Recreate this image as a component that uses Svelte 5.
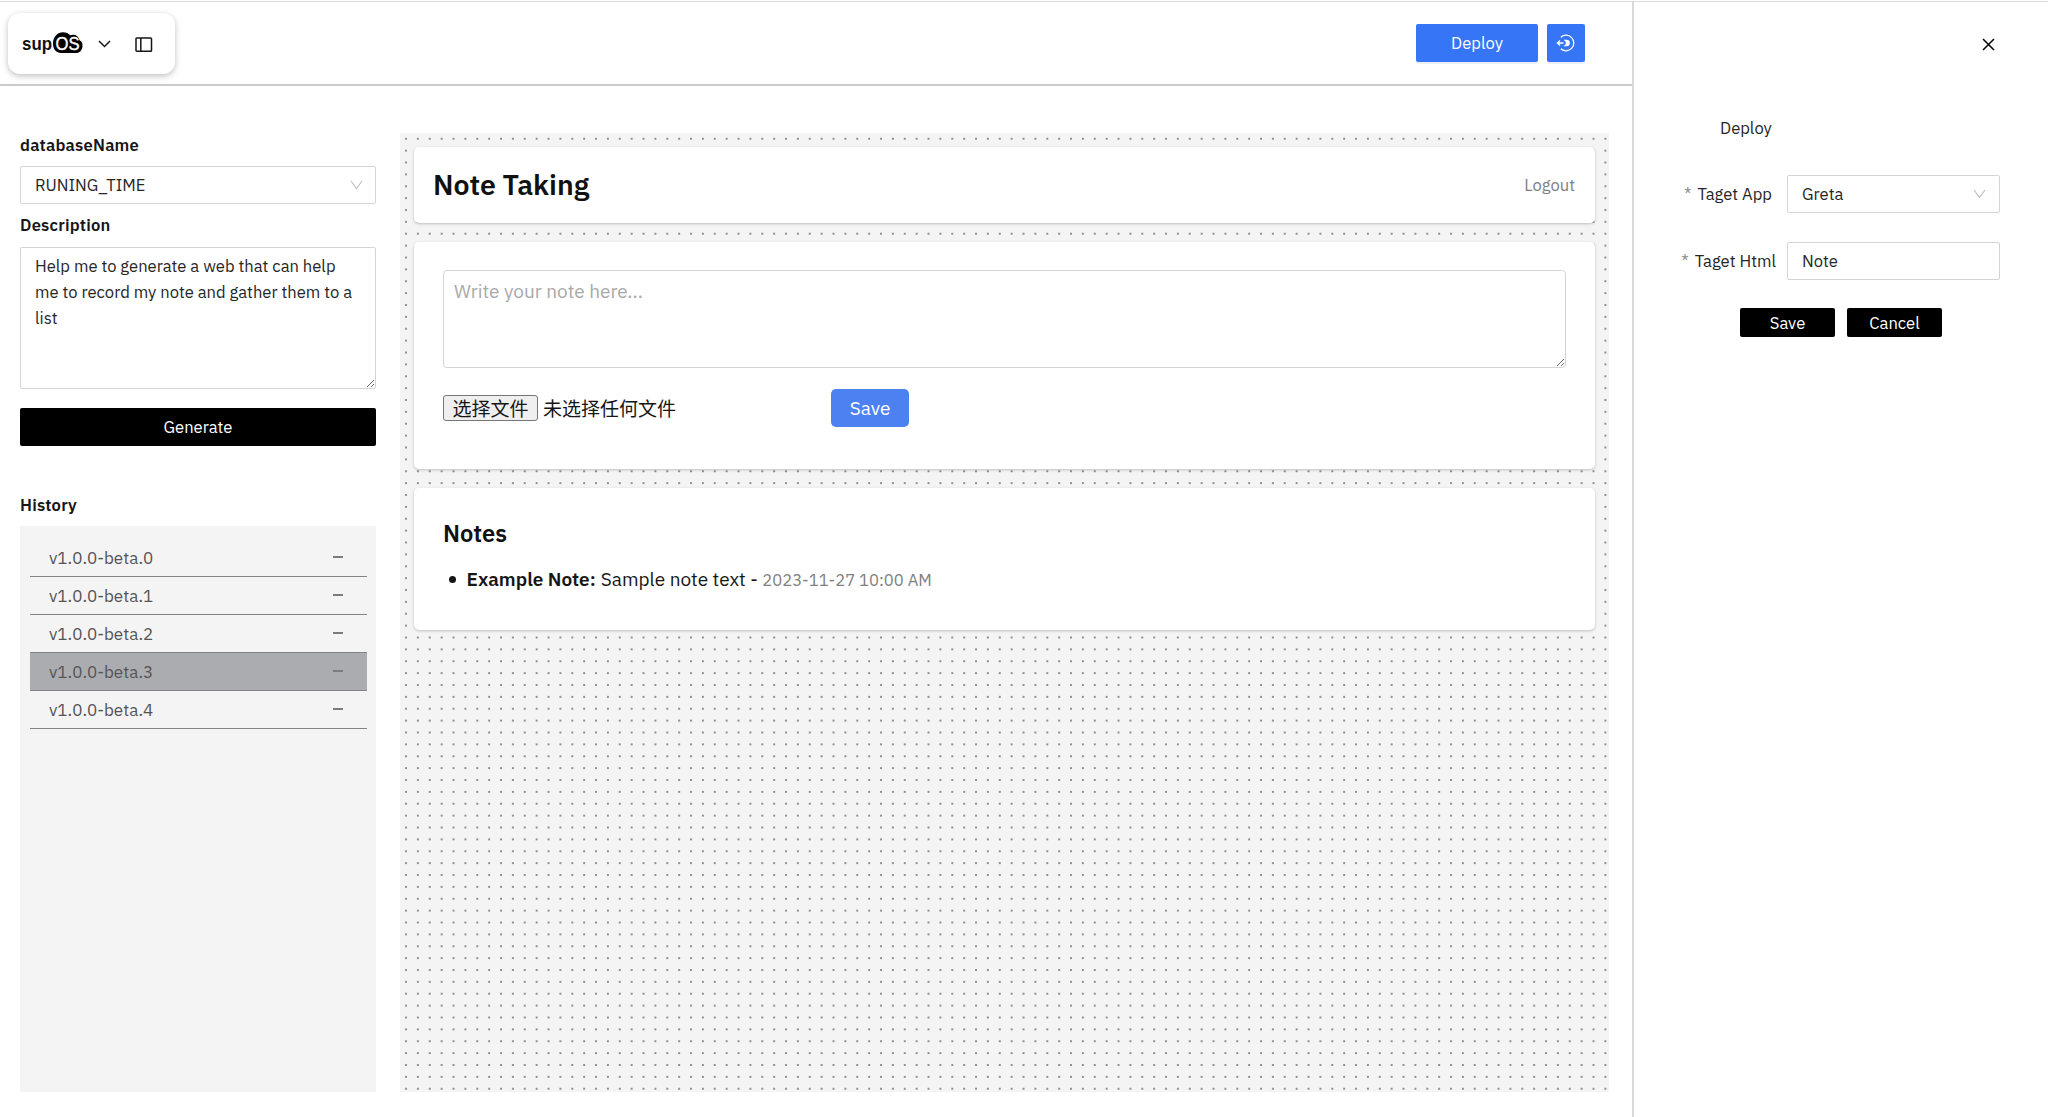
<script lang="ts">
  let databaseName = "RUNING_TIME";
  let description =
    "Help me to generate a web that can help me to record my note and gather them to a list";
  let targetApp = "Greta";
  let targetHtml = "Note";

  const versions = [0, 1, 2, 3, 4].map((n) => "v1.0.0-beta." + n);
  let selected = 3;
</script>

<div class="page">
  <!-- Workspace -->
  <div class="workspace">
    <header class="topbar">
      <div class="brand-card">
        <svg class="logo" width="62" height="30" viewBox="0 0 62 30">
          <path
            class="cloud"
            d="M39 22C34.500 22 31 18.500 31 12.500C31 6 35.500 1.300 41 1.300C44.200 1.300 46.500 2.400 48 4.200C52 2.600 56.800 4.400 57.500 9.300C60 10.300 60.700 12.800 60.500 15.200C60.200 19.200 57.500 22 54 22Z"
          />
          <text class="sup" x="0" y="19" textLength="30" lengthAdjust="spacingAndGlyphs">sup</text>
          <text class="os" x="33.500" y="18.800" textLength="24" lengthAdjust="spacingAndGlyphs">OS</text>
        </svg>
        <svg class="brand-chevron" width="13" height="8" viewBox="0 0 13 8">
          <path d="M1 1L6.500 6.500L12 1" />
        </svg>
        <svg class="brand-panel" width="18" height="16" viewBox="0 0 18 16">
          <rect x="1" y="1" width="15.500" height="13.300" rx="0.800" />
          <path d="M5.800 1V14.300" />
        </svg>
      </div>
      <div class="top-actions">
        <button class="primary deploy">Deploy</button>
        <button class="primary exit" aria-label="Exit">
          <svg width="20" height="20" viewBox="0 0 20 20">
            <path class="ring" d="M4.800 4.200A7.800 7.800 0 1 1 4.800 15.800" />
            <path class="arrow" d="M7.500 10H1.300M4 7.500L1.400 10L4 12.500" />
            <path class="core" d="M7.500 6.700H10.500A3.300 3.300 0 0 1 10.500 13.300H7.500L9.700 11.300V8.700Z" />
          </svg>
        </button>
      </div>
    </header>

    <div class="body">
      <aside class="sidebar">
        <h3 class="label">databaseName</h3>
        <div class="select">
          <span>{databaseName}</span>
          <svg width="13" height="10" viewBox="0 0 13 10"><path d="M1 1L6.500 8.500L12 1" /></svg>
        </div>
        <h3 class="label">Description</h3>
        <textarea class="description" spellcheck="false" bind:value={description}></textarea>
        <button class="dark generate">Generate</button>

        <h3 class="label">History</h3>
        <ul class="history">
          {#each versions as version, i}
            <li class:active={i === selected}>
              <span>{version}</span>
              <i class="minus"></i>
            </li>
          {/each}
        </ul>
      </aside>

      <!-- Generated page preview -->
      <main class="canvas">
        <section class="card title-card">
          <h1>Note Taking</h1>
          <span class="logout">Logout</span>
        </section>

        <section class="card form-card">
          <textarea class="note" placeholder="Write your note here..."></textarea>
          <div class="form-row">
            <div class="file">
              <span class="file-button">选择文件</span>
              <span>未选择任何文件</span>
            </div>
            <button class="note-save">Save</button>
          </div>
        </section>

        <section class="card notes-card">
          <h2>Notes</h2>
          <div class="note-item">
            <i class="bullet"></i>
            <strong>Example Note:</strong>
            <span class="sample">Sample note text -</span>
            <small>2023-11-27 10:00 AM</small>
          </div>
        </section>
      </main>
    </div>
  </div>

  <!-- Deploy drawer -->
  <div class="drawer">
    <div class="close-row">
      <svg width="13" height="13" viewBox="0 0 13 13"><path d="M1 1L12 12M12 1L1 12" /></svg>
    </div>
    <div class="drawer-title">Deploy</div>
    <div class="field app">
      <div class="field-label"><b>*</b><span>Taget App</span></div>
      <div class="select">
        <span>{targetApp}</span>
        <svg width="13" height="10" viewBox="0 0 13 10"><path d="M1 1L6.500 8.500L12 1" /></svg>
      </div>
    </div>
    <div class="field html">
      <div class="field-label"><b>*</b><span>Taget Html</span></div>
      <div class="select"><span>{targetHtml}</span></div>
    </div>
    <div class="drawer-actions">
      <button class="dark">Save</button>
      <button class="dark">Cancel</button>
    </div>
  </div>
</div>

<style>
  :global(body) {
    background: #fff;
    overflow: hidden;
  }

  .page,
  .page * {
    box-sizing: border-box;
  }

  .page {
    display: flex;
    height: 1117px;
    padding-top: 1px;
    background: linear-gradient(#d9dcdb, #d9dcdb) 0 1px / 100% 1px no-repeat #fff;
    font-family: "IBM Plex Sans", Roboto, "Noto Sans CJK SC", sans-serif;
    font-size: 16.6px;
    line-height: 26px;
    color: #262626;
  }

  button,
  textarea {
    font: inherit;
    border: none;
    padding: 0;
    margin: 0;
  }

  h1,
  h2,
  h3,
  ul {
    margin: 0;
    padding: 0;
    font-weight: 600;
  }

  svg {
    display: block;
    fill: none;
    stroke: #161616;
    stroke-width: 1.5;
  }

  .workspace {
    width: 1632px;
    padding-top: 1px;
  }

  /* Top bar */
  .topbar {
    display: flex;
    justify-content: space-between;
    height: 84px;
    padding: 11px 47px 0 8px;
    border-bottom: 2px solid #cbcbcb;
  }

  .brand-card {
    display: flex;
    width: 167px;
    height: 61px;
    padding: 0 0 0 14px;
    border-radius: 12px;
    box-shadow: 0 2px 6px rgba(0, 0, 0, 0.25);
  }

  .logo {
    margin-top: 18px;
    overflow: visible;
    line-height: 1;
  }

  .logo .cloud {
    fill: #000;
    stroke: none;
  }

  .logo text {
    font-family: "Liberation Sans", Arial, sans-serif;
    font-weight: 700;
    font-size: 19px;
    stroke: none;
  }

  .logo .sup {
    fill: #111;
  }

  .logo .os {
    fill: #fff;
    font-weight: 400;
    stroke: #fff;
    stroke-width: 0.4;
  }

  .brand-chevron {
    margin: 27px 24px 0 14px;
  }

  .brand-panel {
    margin-top: 24px;
  }

  .top-actions {
    display: flex;
    gap: 9px;
    padding-top: 11px;
  }

  .primary {
    height: 38px;
    border-radius: 2px;
    background: #3675f6;
    color: #fff;
    box-shadow: 0 2px 0 rgba(5, 50, 145, 0.08);
  }

  .deploy {
    width: 122px;
  }

  .exit {
    display: flex;
    align-items: center;
    justify-content: center;
    width: 38px;
  }

  .exit svg {
    stroke: #fff;
    stroke-width: 1.3;
  }

  .exit .core {
    fill: #fff;
    stroke: none;
  }

  /* Body */
  .body {
    display: flex;
    justify-content: space-between;
    padding: 47px 23px 0 20px;
  }

  .sidebar {
    display: flex;
    flex-direction: column;
    width: 356px;
    height: 959px;
  }

  .label {
    margin-top: -1px;
    font-size: 16.6px;
    line-height: 26px;
    letter-spacing: 0.2px;
    color: #161616;
  }

  .select {
    display: flex;
    align-items: center;
    justify-content: space-between;
    height: 38px;
    padding: 0 13px 0 14px;
    border: 1px solid #d4d4d4;
    border-radius: 2px;
    background: #fff;
  }

  .select svg {
    stroke: #bfbfbf;
    stroke-width: 1.2;
  }

  .sidebar .select {
    margin: 8px 0 9px;
    padding: 0 12px 0 14px;
  }

  .description {
    height: 142px;
    margin-top: 9px;
    padding: 5px 13px 5px 14px;
    border: 1px solid #d4d4d4;
    border-radius: 2px;
    color: #262626;
    outline: none;
    flex: none;
  }

  .dark {
    border-radius: 2px;
    background: #000;
    color: #fff;
  }

  .generate {
    height: 38px;
    margin: 19px 0 47px;
    flex: none;
  }

  .history {
    flex: 1;
    margin-top: 8px;
    padding: 13px 9px 0 10px;
    background: #f4f4f4;
    list-style: none;
    font-weight: 400;
  }

  .history li {
    display: flex;
    align-items: center;
    justify-content: space-between;
    height: 38px;
    padding: 1px 24px 0 19px;
    border-bottom: 1px solid #858585;
    color: #555;
    font-size: 17px;
  }

  .history .active {
    background: #abacb0;
    box-shadow: 0 -1px 0 #858585;
  }

  .minus {
    width: 10px;
    height: 2px;
    margin-bottom: 2px;
    background: #7c7c7c;
  }

  /* Canvas */
  .canvas {
    width: 1209px;
    height: 959px;
    padding: 14px;
    background: radial-gradient(circle, #909090 0.7px, transparent 1.3px) 0.1px -0.2px / 11.875px 11.875px #f4f4f4;
  }

  .card {
    border-radius: 5px;
    background: #fff;
    box-shadow: 0 1px 3px rgba(0, 0, 0, 0.22);
  }

  .title-card {
    display: flex;
    align-items: center;
    justify-content: space-between;
    height: 76px;
    padding: 0 20px 0 19px;
  }

  h1 {
    font-size: 28.5px;
    color: #111;
  }

  .logout {
    color: #808080;
  }

  .form-card {
    height: 227px;
    margin: 19px 0;
    padding: 28px 29px 0;
  }

  .note {
    display: block;
    width: 100%;
    height: 98px;
    padding: 7px 10px;
    border: 1px solid #d4d4d4;
    border-radius: 4px;
    font-size: 19px;
  }

  .note::placeholder {
    color: #a9a9a9;
  }

  .form-row {
    display: flex;
    padding-top: 21px;
  }

  .file {
    display: flex;
    align-items: center;
    gap: 5px;
    width: 388px;
    font-family: "Noto Sans CJK SC", sans-serif;
    font-size: 19px;
    color: #161616;
  }

  .file-button {
    display: flex;
    align-items: center;
    height: 26px;
    padding: 0 8.5px;
    border: 1px solid #767676;
    border-radius: 3px;
    background: #efefef;
  }

  .note-save {
    width: 78px;
    height: 38px;
    border-radius: 5px;
    background: #4d81f2;
    color: #fff;
    font-size: 19px;
  }

  .notes-card {
    height: 142px;
    padding: 31px 29px;
  }

  h2 {
    font-size: 23.7px;
    line-height: 30px;
    color: #111;
  }

  .note-item {
    display: flex;
    align-items: baseline;
    margin-top: 17px;
    font-size: 19px;
    color: #161616;
  }

  .bullet {
    align-self: center;
    width: 7px;
    height: 7px;
    margin: 0 10.5px 0 6px;
    border-radius: 50%;
    background: #161616;
  }

  strong {
    font-weight: 600;
    margin-right: 5px;
  }

  .sample {
    margin-right: 4.5px;
  }

  small {
    font-size: 16.6px;
    color: #808080;
  }

  /* Drawer */
  .drawer {
    width: 416px;
    padding: 36px 48px 0 0;
    margin-top: 1px;
    border-left: 2px solid #d9d9d9;
  }

  .close-row {
    display: flex;
    justify-content: flex-end;
    padding-right: 5px;
  }

  .close-row svg {
    stroke: #000;
  }

  .drawer-title {
    height: 26px;
    margin: 64px 0 0 86px;
  }

  .field {
    display: flex;
    align-items: center;
    justify-content: flex-end;
  }

  .field-label {
    display: flex;
    gap: 6px;
    margin-right: 15px;
  }

  .html .field-label {
    margin-right: 11px;
  }

  .field-label b {
    font-weight: 400;
    color: #8d8d8d;
  }

  .field .select {
    width: 213px;
  }

  .app {
    margin: 34px 0 29px;
  }

  .drawer-actions {
    display: flex;
    gap: 12px;
    margin: 28px 0 0 106px;
  }

  .drawer-actions .dark {
    width: 95px;
    height: 29px;
  }
</style>
